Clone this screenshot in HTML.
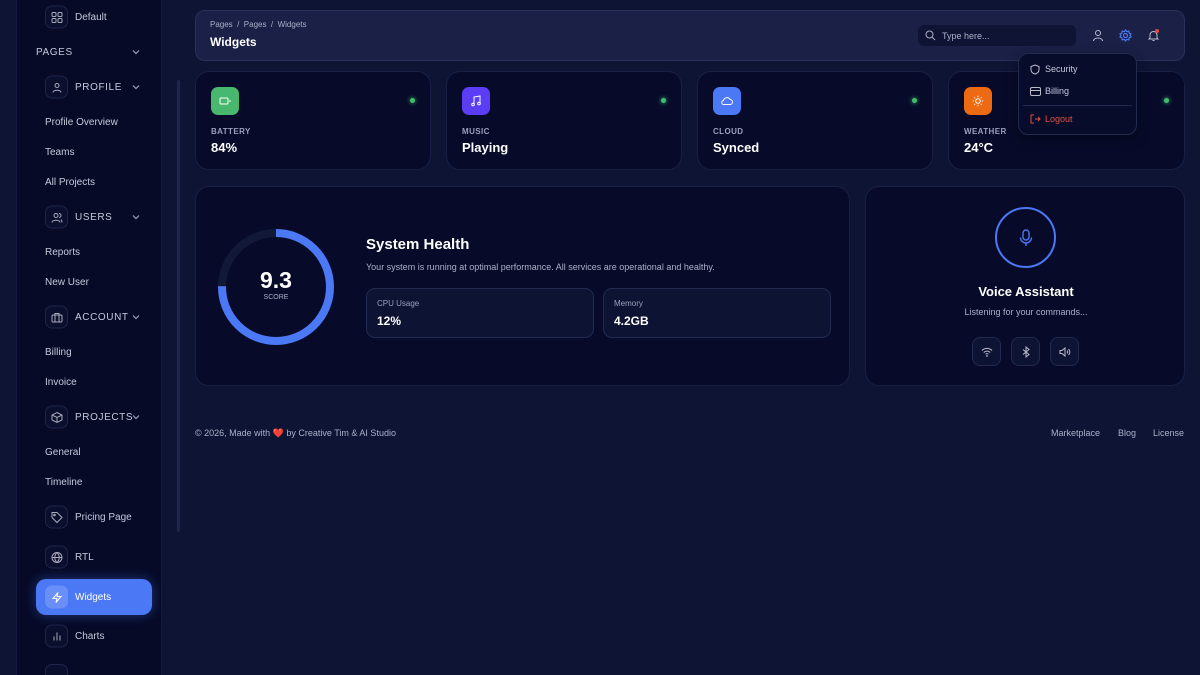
<!DOCTYPE html>
<html style="width:1200px;height:675px;overflow:hidden"><head><meta charset="utf-8"><style>
*{box-sizing:border-box;margin:0;padding:0}
body{width:1200px;height:675px;overflow:hidden;background:#0e1434;font-family:"Liberation Sans",sans-serif;color:#fff;position:relative}
.abs{position:absolute}
.side{left:16px;top:0;width:146px;height:675px;background:#060a27;border-right:1px solid #141a3d;border-left:1px solid #141a3d}
.si{position:absolute;left:45px;font-size:10px;color:#c5c9dc;transform:translateY(-45%)}
.ib{position:absolute;left:45px;width:23px;height:23px;border:1px solid #1e2548;border-radius:7px;background:#0a0f2e;transform:translateY(-50%);display:flex;align-items:center;justify-content:center}
.lbl{position:absolute;left:75px;font-size:10px;color:#c5c9dc;transform:translateY(-45%)}
.up{letter-spacing:.6px;font-size:10px}
.chev{position:absolute;left:132px;transform:translateY(-50%)}
.card{background:#070b29;border:1px solid #1a2045;border-radius:14px}
.ic{position:absolute;left:15px;top:15px;width:28px;height:28px;border-radius:7px;display:flex;align-items:center;justify-content:center}
.dot{position:absolute;right:15px;top:26px;width:5px;height:5px;border-radius:50%;background:#3fbf6e;box-shadow:0 0 4px #3fbf6e}
.cl{position:absolute;left:15px;top:55px;font-size:8px;font-weight:bold;color:#9aa0bb;letter-spacing:.4px}
.cv{position:absolute;left:15px;top:68px;font-size:13px;font-weight:bold;color:#fff}
.stat{position:absolute;top:101px;width:228px;height:50px;border:1px solid #232a50;border-radius:9px;background:#0d1332}
.stat .a{position:absolute;left:10px;top:10px;font-size:8px;color:#9aa0bb}
.stat .b{position:absolute;left:10px;top:25px;font-size:12px;font-weight:bold}
.vb{position:absolute;top:150px;width:29px;height:29px;border:1px solid #232a50;border-radius:8px;background:#0d1332;display:flex;align-items:center;justify-content:center}
</style></head><body>
<div class="abs side"></div>
<div class="abs" style="left:177px;top:80px;width:3px;height:452px;background:#1e2650;border-radius:2px"></div>

<div class="ib" style="top:17px"><svg width="12" height="12" viewBox="0 0 12 12" fill="none" stroke="#aab" stroke-width="1"><rect x="1" y="1" width="4" height="4" rx="1"/><rect x="7" y="1" width="4" height="4" rx="1"/><rect x="1" y="7" width="4" height="4" rx="1"/><rect x="7" y="7" width="4" height="4" rx="1"/></svg></div><div class="lbl" style="top:17px">Default</div>
<div class="si up" style="left:36px;top:52px">PAGES</div><svg class="chev" style="top:52px" width="8" height="5" viewBox="0 0 8 5" fill="none" stroke="#9aa0bb" stroke-width="1.2"><path d="M1 1l3 3 3-3"/></svg>
<div class="ib" style="top:87px"><svg width="12" height="12" viewBox="0 0 12 12" fill="none" stroke="#aab"><circle cx="6" cy="4" r="2"/><path d="M2 11c0-3 8-3 8 0"/></svg></div><div class="lbl up" style="top:87px">PROFILE</div><svg class="chev" style="top:87px" width="8" height="5" viewBox="0 0 8 5" fill="none" stroke="#9aa0bb" stroke-width="1.2"><path d="M1 1l3 3 3-3"/></svg>
<div class="si" style="top:122px">Profile Overview</div>
<div class="si" style="top:152px">Teams</div>
<div class="si" style="top:182px">All Projects</div>
<div class="ib" style="top:217px"><svg width="12" height="12" viewBox="0 0 12 12" fill="none" stroke="#aab"><circle cx="5" cy="4" r="2"/><path d="M1 11c0-3 8-3 8 0M8 2a2 2 0 010 4M10 8c1 1 1 2 1 3"/></svg></div><div class="lbl up" style="top:217px">USERS</div><svg class="chev" style="top:217px" width="8" height="5" viewBox="0 0 8 5" fill="none" stroke="#9aa0bb" stroke-width="1.2"><path d="M1 1l3 3 3-3"/></svg>
<div class="si" style="top:252px">Reports</div>
<div class="si" style="top:282px">New User</div>
<div class="ib" style="top:317px"><svg width="12" height="12" viewBox="0 0 12 12" fill="none" stroke="#aab"><rect x="1" y="3.5" width="10" height="7" rx="1"/><path d="M4 3.5V2h4v1.5M4 3.5v7M8 3.5v7"/></svg></div><div class="lbl up" style="top:317px">ACCOUNT</div><svg class="chev" style="top:317px" width="8" height="5" viewBox="0 0 8 5" fill="none" stroke="#9aa0bb" stroke-width="1.2"><path d="M1 1l3 3 3-3"/></svg>
<div class="si" style="top:352px">Billing</div>
<div class="si" style="top:382px">Invoice</div>
<div class="ib" style="top:417px"><svg width="12" height="12" viewBox="0 0 12 12" fill="none" stroke="#aab"><path d="M6 1l5 2.5v5L6 11 1 8.5v-5zM1 3.5L6 6l5-2.5M6 6v5"/></svg></div><div class="lbl up" style="top:417px">PROJECTS</div><svg class="chev" style="top:417px" width="8" height="5" viewBox="0 0 8 5" fill="none" stroke="#9aa0bb" stroke-width="1.2"><path d="M1 1l3 3 3-3"/></svg>
<div class="si" style="top:452px">General</div>
<div class="si" style="top:482px">Timeline</div>
<div class="ib" style="top:517px"><svg width="12" height="12" viewBox="0 0 12 12" fill="none" stroke="#aab"><path d="M1 1h5l5 5-5 5-5-5z"/><circle cx="3.5" cy="3.5" r=".8"/></svg></div><div class="lbl" style="top:517px">Pricing Page</div>
<div class="ib" style="top:557px"><svg width="12" height="12" viewBox="0 0 12 12" fill="none" stroke="#aab"><circle cx="6" cy="6" r="5"/><path d="M1 6h10M6 1c-3 3-3 7 0 10M6 1c3 3 3 7 0 10"/></svg></div><div class="lbl" style="top:557px">RTL</div>
<div class="abs" style="left:36px;top:579px;width:116px;height:36px;border-radius:10px;background:#4b78f5;box-shadow:0 0 12px rgba(75,120,245,.4)"></div>
<div class="ib" style="top:597px;background:#6a90f7;border-color:#6a90f7"><svg width="12" height="12" viewBox="0 0 12 12" fill="none" stroke="#fff"><path d="M7 1L2 7h4l-1 4 5-6H6z"/></svg></div><div class="lbl" style="top:597px;color:#fff">Widgets</div>
<div class="ib" style="top:636px"><svg width="12" height="12" viewBox="0 0 12 12" stroke="#aab"><path d="M3 10V6M6 10V2M9 10V5"/></svg></div><div class="lbl" style="top:636px">Charts</div>
<div class="abs" style="left:45px;top:664px;width:23px;height:11px;border:1px solid #1e2548;border-bottom:none;border-radius:7px 7px 0 0;background:#0a0f2e"></div>

<!-- header -->
<div class="abs" style="left:195px;top:10px;width:990px;height:51px;background:#1a2046;border:1px solid #2a3158;border-radius:10px"></div>
<div class="abs" style="left:210px;top:20px;font-size:8px;color:#aab0c8">Pages &nbsp;/&nbsp; Pages &nbsp;/&nbsp; Widgets</div>
<div class="abs" style="left:210px;top:35px;font-size:12px;font-weight:bold">Widgets</div>
<div class="abs" style="left:918px;top:25px;width:158px;height:21px;background:#0f1434;border-radius:6px"></div>
<svg class="abs" style="left:925px;top:30px" width="11" height="11" viewBox="0 0 11 11" fill="none" stroke="#aab"><circle cx="4.5" cy="4.5" r="3.5"/><path d="M7 7l3 3"/></svg>
<div class="abs" style="left:942px;top:31px;font-size:9px;color:#aab0c8">Type here...</div>
<svg class="abs" style="left:1092px;top:29px" width="12" height="13" viewBox="0 0 12 13" fill="none" stroke="#bbc"><circle cx="6" cy="4" r="2.5"/><path d="M1.5 12c0-4 9-4 9 0"/></svg>
<svg class="abs" style="left:1119px;top:29px" width="13" height="13" viewBox="0 0 13 13" fill="none" stroke="#4b78f5" stroke-width="1.2"><circle cx="6.5" cy="6.5" r="2"/><path d="M6.5 1l1.3 1.7 2-.6.3 2 1.9.9-1 1.5 1 1.5-1.9.9-.3 2-2-.6L6.5 12 5.2 10.3l-2 .6-.3-2L1 8l1-1.5L1 5l1.9-.9.3-2 2 .6z"/></svg>
<svg class="abs" style="left:1147px;top:29px" width="13" height="13" viewBox="0 0 13 13" fill="none" stroke="#bbc"><path d="M3 9V6a3.5 3.5 0 017 0v3l1 1H2zM5.5 11.5h2"/></svg>
<div class="abs" style="left:1155px;top:29px;width:4px;height:4px;border-radius:50%;background:#e24a3b"></div>

<!-- cards -->
<div class="abs card" style="left:195px;top:71px;width:236px;height:99px"><div class="ic" style="background:#48b86e"><svg width="12" height="10" viewBox="0 0 12 10" fill="none" stroke="#fff"><rect x="1" y="2" width="8" height="6" rx="1"/><path d="M11 4v2"/></svg></div><div class="dot"></div><div class="cl">BATTERY</div><div class="cv">84%</div></div>
<div class="abs card" style="left:446px;top:71px;width:236px;height:99px"><div class="ic" style="background:#5b3df5"><svg width="12" height="12" viewBox="0 0 12 12" fill="none" stroke="#fff"><path d="M4 9V2l6-1v7"/><circle cx="3" cy="9.5" r="1.3"/><circle cx="9" cy="8.5" r="1.3"/></svg></div><div class="dot"></div><div class="cl">MUSIC</div><div class="cv">Playing</div></div>
<div class="abs card" style="left:697px;top:71px;width:236px;height:99px"><div class="ic" style="background:#4b78f5"><svg width="12" height="10" viewBox="0 0 12 10" fill="none" stroke="#fff"><path d="M3 8.5h6a2.5 2.5 0 000-5 3.5 3.5 0 00-6.5 1A2 2 0 003 8.5z"/></svg></div><div class="dot"></div><div class="cl">CLOUD</div><div class="cv">Synced</div></div>
<div class="abs card" style="left:948px;top:71px;width:237px;height:99px"><div class="ic" style="background:#ee6a12"><svg width="12" height="12" viewBox="0 0 12 12" fill="none" stroke="#fff"><circle cx="6" cy="6" r="2.3"/><path d="M6 .8v1.3M6 9.9v1.3M.8 6h1.3M9.9 6h1.3M2.3 2.3l.9.9M8.8 8.8l.9.9M2.3 9.7l.9-.9M8.8 3.2l.9-.9"/></svg></div><div class="dot"></div><div class="cl">WEATHER</div><div class="cv">24°C</div></div>

<!-- dropdown -->
<div class="abs" style="left:1018px;top:53px;width:119px;height:82px;background:#080c2b;border:1px solid #222a4e;border-radius:10px;box-shadow:0 4px 12px rgba(0,0,0,.4)"></div>
<svg class="abs" style="left:1030px;top:64px" width="10" height="11" viewBox="0 0 10 11" fill="none" stroke="#bbc"><path d="M5 1l4 1.5v3C9 8 7 9.5 5 10 3 9.5 1 8 1 5.5v-3z"/></svg>
<div class="abs" style="left:1045px;top:64px;font-size:9px;color:#c5c9dc">Security</div>
<svg class="abs" style="left:1030px;top:87px" width="11" height="9" viewBox="0 0 11 9" fill="none" stroke="#bbc"><rect x=".5" y=".5" width="10" height="8" rx="1.5"/><path d="M.5 3.5h10"/></svg>
<div class="abs" style="left:1045px;top:86px;font-size:9px;color:#c5c9dc">Billing</div>
<div class="abs" style="left:1023px;top:105px;width:109px;height:1px;background:#222a4e"></div>
<svg class="abs" style="left:1030px;top:114px" width="11" height="10" viewBox="0 0 11 10" fill="none" stroke="#e2503f"><path d="M4 1H1v8h3M5 5h5M8 3l2 2-2 2"/></svg>
<div class="abs" style="left:1045px;top:114px;font-size:9px;color:#e2503f">Logout</div>

<!-- system health -->
<div class="abs card" style="left:195px;top:186px;width:655px;height:200px">
<svg class="abs" style="left:20px;top:40px" width="120" height="120" viewBox="0 0 120 120"><circle cx="60" cy="60" r="54" fill="none" stroke="#121938" stroke-width="8"/><circle cx="60" cy="60" r="54" fill="none" stroke="#4b78f5" stroke-width="8" stroke-dasharray="255 340" transform="rotate(-90 60 60)"/></svg>
<div class="abs" style="left:20px;top:80px;width:120px;text-align:center;font-size:23px;font-weight:bold">9.3</div>
<div class="abs" style="left:20px;top:107px;width:120px;text-align:center;font-size:7px;color:#aab0c8">SCORE</div>
<div class="abs" style="left:170px;top:49px;font-size:15px;font-weight:bold">System Health</div>
<div class="abs" style="left:170px;top:75px;font-size:9px;color:#aab0c8">Your system is running at optimal performance. All services are operational and healthy.</div>
<div class="stat" style="left:170px"><div class="a">CPU Usage</div><div class="b">12%</div></div>
<div class="stat" style="left:407px"><div class="a">Memory</div><div class="b">4.2GB</div></div>
</div>

<!-- voice -->
<div class="abs card" style="left:865px;top:186px;width:320px;height:200px">
<div class="abs" style="left:129px;top:20px;width:61px;height:61px;border:2px solid #4b78f5;border-radius:50%;display:flex;align-items:center;justify-content:center"><svg width="14" height="18" viewBox="0 0 14 18" fill="none" stroke="#4b78f5" stroke-width="1.4"><rect x="4" y="1" width="6" height="10" rx="3"/><path d="M1.5 8.5a5.5 5.5 0 0011 0M7 14v3"/></svg></div>
<div class="abs" style="left:0;top:97px;width:320px;text-align:center;font-size:13px;font-weight:bold">Voice Assistant</div>
<div class="abs" style="left:0;top:120px;width:320px;text-align:center;font-size:9px;color:#aab0c8">Listening for your commands...</div>
<div class="vb" style="left:106px"><svg width="12" height="10" viewBox="0 0 12 10" fill="none" stroke="#bbc"><path d="M1 3.5a7 7 0 0110 0M2.8 5.5a4.5 4.5 0 016.4 0M4.6 7.3a2 2 0 012.8 0"/><circle cx="6" cy="9" r=".4"/></svg></div>
<div class="vb" style="left:145px"><svg width="8" height="12" viewBox="0 0 8 12" fill="none" stroke="#bbc"><path d="M1 3.5l6 5-3 2.5V1l3 2.5-6 5"/></svg></div>
<div class="vb" style="left:184px"><svg width="12" height="10" viewBox="0 0 12 10" fill="none" stroke="#bbc"><path d="M1 3.5h2l3-2.5v8L3 6.5H1zM8 3.5a2 2 0 010 3M9.5 2a4 4 0 010 6"/></svg></div>
</div>

<div class="abs" style="left:195px;top:428px;font-size:9px;color:#aab0c8">© 2026, Made with <span style="color:#e24a3b">❤️</span> by Creative Tim &amp; AI Studio</div>
<div class="abs" style="left:1051px;top:428px;font-size:9px;color:#aab0c8">Marketplace</div>
<div class="abs" style="left:1118px;top:428px;font-size:9px;color:#aab0c8">Blog</div>
<div class="abs" style="left:1153px;top:428px;font-size:9px;color:#aab0c8">License</div>
</body></html>
